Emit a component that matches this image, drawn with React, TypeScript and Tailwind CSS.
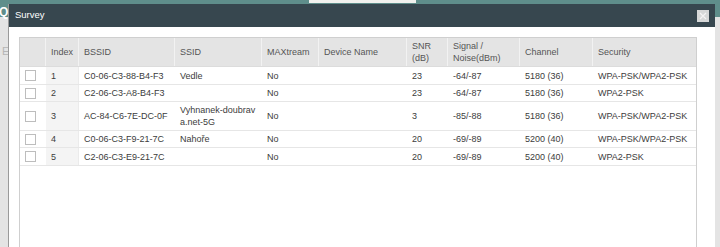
import React from "react";

const cols = "grid grid-cols-[26px_33px_96px_87px_57px_88px_41px_72px_73px_103px]";

type Row = {
  i: string;
  bssid: string;
  ssid: React.ReactNode;
  snr: string;
  sig: string;
  ch: string;
  sec: string;
  h: string;
};

const rows: Row[] = [
  { i: "1", bssid: "C0-06-C3-88-B4-F3", ssid: "Vedle", snr: "23", sig: "-64/-87", ch: "5180 (36)", sec: "WPA-PSK/WPA2-PSK", h: "h-[18px]" },
  { i: "2", bssid: "C2-06-C3-A8-B4-F3", ssid: "", snr: "23", sig: "-64/-87", ch: "5180 (36)", sec: "WPA2-PSK", h: "h-[17px]" },
  {
    i: "3",
    bssid: "AC-84-C6-7E-DC-0F",
    ssid: (
      <span>
        Vyhnanek-doubrav
        <br />
        a.net-5G
      </span>
    ),
    snr: "3",
    sig: "-85/-88",
    ch: "5180 (36)",
    sec: "WPA-PSK/WPA2-PSK",
    h: "h-[29px]",
  },
  { i: "4", bssid: "C0-06-C3-F9-21-7C", ssid: "Nahoře", snr: "20", sig: "-69/-89", ch: "5200 (40)", sec: "WPA-PSK/WPA2-PSK", h: "h-[17px]" },
  { i: "5", bssid: "C2-06-C3-E9-21-7C", ssid: "", snr: "20", sig: "-69/-89", ch: "5200 (40)", sec: "WPA2-PSK", h: "h-[18px]" },
];

function Cell({ children, className = "" }: { children?: React.ReactNode; className?: string }) {
  return <div className={`flex items-center px-[5px] leading-[12px] ${className}`}>{children}</div>;
}

function HCell({ children, className = "" }: { children?: React.ReactNode; className?: string }) {
  return (
    <div className={`flex items-center px-[5px] leading-[12px] border-r border-[#f2f2f2] last:border-r-0 ${className}`}>
      {children}
    </div>
  );
}

export default function App() {
  return (
    <div
      className="relative w-[720px] h-[247px] overflow-hidden bg-[#e4e4e4]"
      style={{ fontFamily: '"Liberation Sans", Arial, sans-serif' }}
    >
      {/* underlying page */}
      <div className="flex flex-col">
        <div className="h-[17px] bg-[#5f8e8b] flex items-start">
          <span className="text-white font-bold text-[12px] leading-[12px] mt-[6px] ml-[-1px]">Q</span>
          <div className="ml-[301px] w-[107px] h-[3px] bg-[#f1f1ee]"></div>
        </div>
        <div className="pt-[28px] pl-[2px] text-[11px] text-[#b5b5b5] leading-[12px]">E</div>
      </div>

      {/* dialog */}
      <div className="absolute left-[8px] top-[4px] w-[707px] h-[260px] bg-white border-l border-[#9a9a9a] flex flex-col">
        <div className="h-[23px] bg-[#37474f] flex items-center justify-between pl-[6px] pr-[6px]">
          <span className="text-white text-[9.5px]">Survey</span>
          <div className="w-[12px] h-[12px] bg-[#d6d8d8] flex items-center justify-center">
            <svg width="8" height="8" viewBox="0 0 8 8">
              <path d="M1 1L7 7M7 1L1 7" stroke="#f4f4f4" strokeWidth="1.2" />
            </svg>
          </div>
        </div>
        <div className="pt-[10px] pl-[10px] pr-[18px] flex-1 flex">
          <div className="flex-1 border border-[#cfcfcf] text-[9px] text-[#3c3c3c]">
            {/* header */}
            <div className={`${cols} h-[29px] bg-[#e4e4e4] text-[#555] border-b border-[#dcdcdc]`}>
              <HCell></HCell>
              <HCell>Index</HCell>
              <HCell>BSSID</HCell>
              <HCell>SSID</HCell>
              <HCell>MAXtream</HCell>
              <HCell>Device Name</HCell>
              <HCell>
                <span>
                  SNR
                  <br />
                  (dB)
                </span>
              </HCell>
              <HCell>
                <span>
                  Signal /
                  <br />
                  Noise(dBm)
                </span>
              </HCell>
              <HCell>Channel</HCell>
              <HCell>Security</HCell>
            </div>
            {rows.map((r) => (
              <div key={r.i} className={`${cols} ${r.h} border-b border-[#e6e6e6]`}>
                <Cell>
                  <div className="w-[11px] h-[11px] border border-[#bdbdbd] bg-white"></div>
                </Cell>
                <Cell className="bg-[#f4f4f4] border-r border-[#ebebeb]">{r.i}</Cell>
                <Cell>{r.bssid}</Cell>
                <Cell>{r.ssid}</Cell>
                <Cell>No</Cell>
                <Cell></Cell>
                <Cell>{r.snr}</Cell>
                <Cell>{r.sig}</Cell>
                <Cell>{r.ch}</Cell>
                <Cell>{r.sec}</Cell>
              </div>
            ))}
          </div>
        </div>
      </div>
    </div>
  );
}
